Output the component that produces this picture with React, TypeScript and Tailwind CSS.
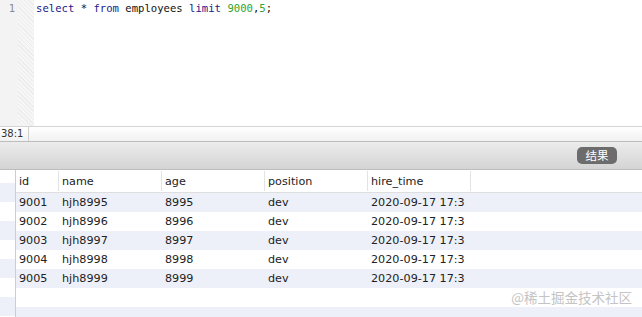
const cols = [
  { key: 'id', w: 'w-[43px]' },
  { key: 'name', w: 'w-[103px]' },
  { key: 'age', w: 'w-[103px]' },
  { key: 'position', w: 'w-[103px]' },
  { key: 'hire_time', w: 'w-[103px]' },
]

const rows = [
  ['9001', 'hjh8995', '8995', 'dev', '2020-09-17 17:3'],
  ['9002', 'hjh8996', '8996', 'dev', '2020-09-17 17:3'],
  ['9003', 'hjh8997', '8997', 'dev', '2020-09-17 17:3'],
  ['9004', 'hjh8998', '8998', 'dev', '2020-09-17 17:3'],
  ['9005', 'hjh8999', '8999', 'dev', '2020-09-17 17:3'],
]

const sans = "font-['DejaVu_Sans',Verdana,sans-serif]"

export default function App() {
  return (
    <div className={`relative flex h-[317px] w-[642px] flex-col overflow-hidden bg-white ${sans}`}>
      {/* editor */}
      <div className="flex h-[126px] shrink-0">
        <div className="flex w-[34px] shrink-0">
          <div className="w-[18px] bg-[#f3f3f3] pt-[2px] text-right font-['DejaVu_Sans_Mono',monospace] text-[10.5px] leading-[13px] text-[#8a8a8a]">
            <span className="pr-[3px]">1</span>
          </div>
          <div className="w-[16px] bg-[#f6f6f6] bg-[repeating-linear-gradient(45deg,#ececec_0px,#ececec_1px,transparent_1px,transparent_3px)]" />
        </div>
        <div className="pl-[2px] pt-[2px] font-['DejaVu_Sans_Mono',monospace] text-[10.6px] leading-[13px] whitespace-pre text-[#111]">
          <span className="text-[#20208a]">select</span> * <span className="text-[#20208a]">from</span> employees{' '}
          <span className="text-[#20208a]">limit</span> <span className="text-[#2fa52f]">9000</span>,
          <span className="text-[#2fa52f]">5</span>;
        </div>
      </div>

      {/* status bar */}
      <div className="flex h-[15px] shrink-0 border-t border-[#d4d4d4] bg-gradient-to-b from-white to-[#f1f1f1]">
        <div className="w-[29px] border-r border-[#cfcfcf] pl-[1px] text-[10px] leading-[14px] text-[#333]">38:1</div>
      </div>

      {/* toolbar */}
      <div className="flex h-[29px] shrink-0 items-center justify-end border-y border-[#bdbdbd] bg-gradient-to-b from-[#ececec] to-[#d4d4d4] pr-[25px]">
        <div className="flex h-[17px] w-[40px] items-center justify-center rounded-[5px] bg-[#6c6c6c] font-['Noto_Sans_CJK_SC',sans-serif] text-[11.5px] text-white">
          结果
        </div>
      </div>

      {/* results */}
      <div className="flex min-h-0 flex-1">
        <div className="flex w-[16px] shrink-0 flex-col border-r border-[#cdcdcd]">
          <div className="h-[13px] shrink-0 bg-white" />
          {[0, 1, 2, 3, 4, 5, 6].map(i => (
            <div key={i} className={`h-[19px] shrink-0 ${i % 2 === 0 ? 'bg-[#edf0f8]' : 'bg-white'}`} />
          ))}
        </div>
        <div className="flex min-w-0 flex-1 flex-col text-[11.2px] text-[#222]">
          <div className="flex h-[23px] shrink-0 items-center border-b border-[#dedede] bg-white">
            {cols.map(c => (
              <div key={c.key} className={`${c.w} flex h-[20px] items-center border-r border-[#e3e3e3] pl-[3px] pt-[3px]`}>
                {c.key}
              </div>
            ))}
          </div>
          {rows.map((r, i) => (
            <div key={r[0]} className={`flex h-[19px] shrink-0 items-center pt-[2px] ${i % 2 === 0 ? 'bg-[#edf0f8]' : 'bg-white'}`}>
              {r.map((v, j) => (
                <div key={j} className={`${cols[j].w} pl-[3px] whitespace-nowrap`}>
                  {v}
                </div>
              ))}
            </div>
          ))}
          <div className="h-[19px] shrink-0 bg-white" />
          <div className="h-[19px] shrink-0 bg-[#edf0f8]" />
        </div>
      </div>

      <div className="absolute right-[10px] bottom-[10px] font-['Noto_Sans_CJK_SC',sans-serif] text-[13.5px] text-[#c4c4c4]">
        @稀土掘金技术社区
      </div>
    </div>
  )
}
